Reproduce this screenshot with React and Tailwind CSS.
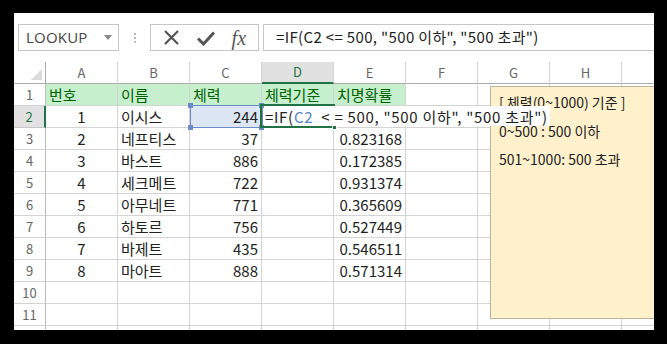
import React from 'react';

const COLS = ['A', 'B', 'C', 'D', 'E', 'F', 'G', 'H', ''];

const DATA = [
  ['1', '이시스', '244', ''],
  ['2', '네프티스', '37', '0.823168'],
  ['3', '바스트', '886', '0.172385'],
  ['4', '세크메트', '722', '0.931374'],
  ['5', '아무네트', '771', '0.365609'],
  ['6', '하토르', '756', '0.527449'],
  ['7', '바제트', '435', '0.546511'],
  ['8', '마아트', '888', '0.571314'],
];

const cellFont = { fontFamily: '"Noto Sans CJK KR", "Noto Sans", sans-serif' };

const Cell = ({ w = 'w-[72px]', className = '', children }) => (
  <div className={`${w} h-[22px] shrink-0 border-r border-b border-[#d4d4d4] flex items-center px-[3px] text-[15px] leading-none text-[#222] ${className}`}>
    {children}
  </div>
);

const RowHead = ({ n, active }) => (
  <div
    className={`w-[32px] h-[22px] shrink-0 border-b flex items-center justify-center text-[13px] ${
      active
        ? 'bg-[#e1e1e1] border-r-2 border-r-[#217346] border-b-[#c6c6c6] text-[#217346]'
        : 'bg-white border-r border-r-[#bdbdbd] border-b-[#d4d4d4] text-[#666]'
    }`}
  >
    {n}
  </div>
);

export default function App() {
  return (
    <div className="w-[667px] h-[344px] bg-black pt-[13px] pl-[14px]">
      <div className="relative w-[640px] h-[317px] bg-white overflow-hidden" style={cellFont}>
        {/* formula bar */}
        <div className="h-[49px] flex items-start pt-[11px] pl-[4px]">
          <div className="w-[101px] h-[27px] border border-[#c6c6c6] flex items-center justify-between pl-[7px] pr-[6px]">
            <span className="text-[15px] text-[#444] tracking-[0.2px]" style={{ fontFamily: '"Open Sans", sans-serif' }}>LOOKUP</span>
            <svg width="8" height="5" viewBox="0 0 8 5"><path d="M0 0h8L4 5z" fill="#8a8a8a" /></svg>
          </div>
          <div className="w-[31px] h-[27px] flex items-center justify-center">
            <div className="flex flex-col gap-[2px]">
              <span className="w-[2px] h-[2px] bg-[#bbb]" />
              <span className="w-[2px] h-[2px] bg-[#bbb]" />
              <span className="w-[2px] h-[2px] bg-[#bbb]" />
            </div>
          </div>
          <div className="w-[109px] h-[27px] border border-[#c6c6c6] flex items-center justify-around px-[4px]">
            <svg width="17" height="17" viewBox="0 0 17 17">
              <path d="M2 2L15 15M15 2L2 15" stroke="#555" strokeWidth="2.2" />
            </svg>
            <svg width="20" height="16" viewBox="0 0 20 16">
              <path d="M2 8.5L7.5 14L18 2.5" stroke="#555" strokeWidth="3" fill="none" />
            </svg>
            <span className="text-[20px] italic text-[#555] leading-none" style={{ fontFamily: '"Liberation Serif", serif' }}>fx</span>
          </div>
          <div className="ml-[4px] flex-1 h-[27px] border-y border-l border-[#c6c6c6] flex items-center pl-[12px] text-[15px] text-[#222] tracking-[0.35px] whitespace-pre">
            =IF(C2 &lt;= 500, "500 이하", "500 초과")
          </div>
        </div>

        {/* grid */}
        <div className="relative">
          <div className="flex">
            <div className="w-[32px] h-[22px] shrink-0 border-r border-b border-[#ababab] flex items-end justify-end p-[3px]">
              <svg width="11" height="11" viewBox="0 0 11 11"><path d="M11 0V11H0z" fill="#dadada" /></svg>
            </div>
            {COLS.map((c, i) => (
              <div
                key={i}
                className={`w-[72px] h-[22px] shrink-0 flex items-center justify-center text-[13px] border-r border-r-[#d4d4d4] ${
                  c === 'D'
                    ? 'bg-[#e1e1e1] border-b-2 border-b-[#217346] text-[#217346]'
                    : 'bg-white border-b border-b-[#ababab] text-[#666]'
                }`}
              >
                {c}
              </div>
            ))}
          </div>

          <div className="flex">
            <RowHead n="1" />
            {['번호', '이름', '체력', '체력기준', '치명확률'].map((t) => (
              <Cell key={t} className="bg-[#c6efce] text-[#006100]">{t}</Cell>
            ))}
            {[0, 1, 2, 3].map((i) => <Cell key={i} />)}
          </div>

          {DATA.map((r, i) => (
            <div key={i} className="flex">
              <RowHead n={String(i + 2)} active={i === 0} />
              <Cell className="justify-center">{r[0]}</Cell>
              <Cell>{r[1]}</Cell>
              <Cell className={`justify-end ${i === 0 ? 'bg-[#dce6f4]' : ''}`}>{r[2]}</Cell>
              <Cell />
              <Cell className="justify-end">{r[3]}</Cell>
              {[0, 1, 2, 3].map((k) => <Cell key={k} />)}
            </div>
          ))}

          {['10', '11', ''].map((n, i) => (
            <div key={i} className="flex">
              <RowHead n={n} />
              {COLS.map((c, k) => <Cell key={k} />)}
            </div>
          ))}

          {/* C2 reference highlight */}
          <div className="absolute left-[176px] top-[43px] w-[73px] h-[23px] border border-[#6b8cc9]" />
          {[
            'left-[174px] top-[41px]',
            'left-[245px] top-[41px]',
            'left-[174px] top-[63px]',
            'left-[245px] top-[63px]',
          ].map((p) => (
            <div key={p} className={`absolute ${p} w-[5px] h-[5px] bg-[#6b8cc9]`} />
          ))}

          {/* comment */}
          <div className="absolute left-[476px] top-[24px] w-[190px] h-[233px] bg-[#fff1cb] border border-[#bfb39a] pl-[8px] pt-[8px] text-[14px] text-[#222] leading-none">
            <div className="h-[27px]">[ 체력(0~1000) 기준 ]</div>
            <div className="h-[28px] pt-[2px]">0~500 : 500 이하</div>
            <div className="pt-[2px]">501~1000: 500 초과</div>
          </div>

          {/* active cell D2 */}
          <div className="absolute left-[246px] top-[42px] w-[75px] h-[24px] border-2 border-[#217346]" />
          <div className="absolute left-[318px] top-[63px] w-[5px] h-[5px] bg-[#217346] border border-white" />

          {/* in-cell edit text */}
          <div className="absolute left-[250px] top-[44px] w-[286px] h-[20px] bg-white flex items-center pl-[1px] text-[15px] text-[#222] leading-none whitespace-pre tracking-[0.7px]">
            =IF(<span className="text-[#4f86c6]">C2</span>  &lt; = 500, "500 이하", "500 초과")
          </div>
        </div>
      </div>
    </div>
  );
}
